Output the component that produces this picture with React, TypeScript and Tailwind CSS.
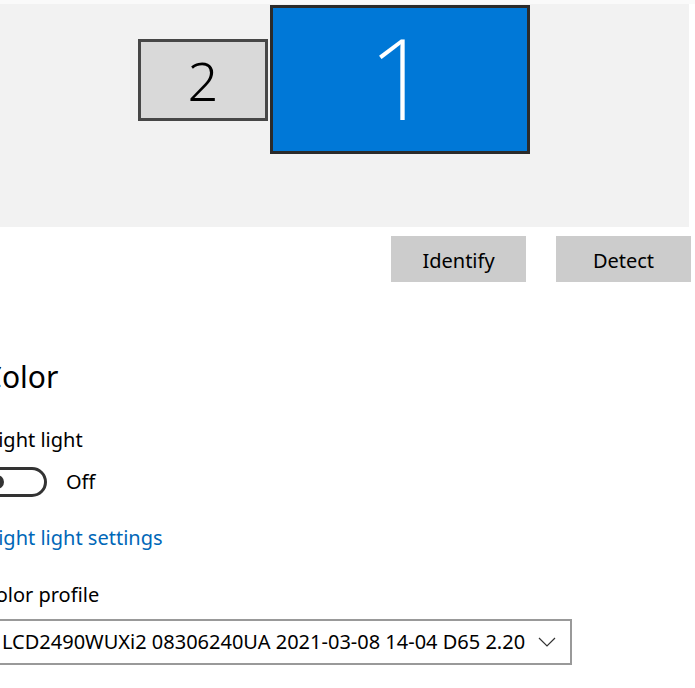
import React from "react";

const font = { fontFamily: '"Segoe UI", "Noto Sans", "Open Sans", sans-serif' };

export default function App() {
  return (
    <div className="w-[695px] h-[688px] bg-white overflow-hidden text-black" style={font}>
      <div className="h-[4px] bg-[#fafafa]" />
      <div className="relative w-[689px] h-[223px] bg-[#f2f2f2]">
        <div className="absolute left-[138px] top-[35px] w-[130px] h-[82px] bg-[#d9d9d9] border-[3px] border-[#474747] flex items-center justify-center">
          <span className="text-[54px] font-light leading-none">2</span>
        </div>
        <div className="absolute left-[270px] top-[1px] w-[260px] h-[149px] bg-[#0078d7] border-[3px] border-[#2b2b2b] flex items-center justify-center">
          <span className="text-[112px] font-extralight leading-none text-white -mt-[6px]">1</span>
        </div>
      </div>
      <div className="flex mt-[9px] pl-[391px] gap-[30px]">
        <button className="w-[135px] h-[46px] bg-[#cccccc] text-[20px] pt-[3px]">Identify</button>
        <button className="w-[135px] h-[46px] bg-[#cccccc] text-[20px] pt-[3px]">Detect</button>
      </div>
      <div className="-ml-[17px] mt-[75px]">
        <div className="text-[30px] leading-[40px]">Color</div>
        <div className="mt-[29px] text-[20px] leading-[28px]">Night light</div>
        <div className="mt-[13px] flex items-center gap-[19px]">
          <div className="w-[64px] h-[30px] rounded-full border-[3px] border-[#333] flex items-center pl-[4px]">
            <div className="w-[14px] h-[14px] rounded-full bg-[#333]" />
          </div>
          <span className="text-[20px]">Off</span>
        </div>
        <div className="mt-[27px] text-[20px] leading-[28px] text-[#0067b8]">Night light settings</div>
        <div className="mt-[29px] text-[20px] leading-[28px]">Color profile</div>
        <div className="mt-[10px] w-[589px] h-[46px] border-2 border-[#999] flex items-center justify-between pl-[17px] pr-[14px]">
          <span className="text-[20px]">LCD2490WUXi2 08306240UA 2021-03-08 14-04 D65 2.20</span>
          <svg width="18" height="10" viewBox="0 0 18 10" fill="none" stroke="#333" strokeWidth="1.2">
            <path d="M1 1 L9 9 L17 1" />
          </svg>
        </div>
      </div>
    </div>
  );
}
